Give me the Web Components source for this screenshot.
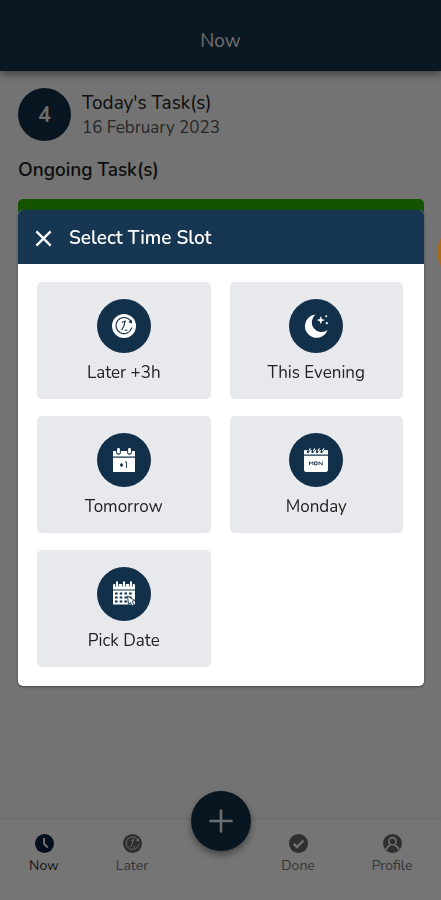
<!DOCTYPE html>
<html lang="en">
<head>
<meta charset="utf-8">
<meta name="viewport" content="width=device-width, initial-scale=1">
<title>Now</title>
<style>
  html, body { margin: 0; height: 100%; }
  body {
    --navy: #163550;
    --deep: #13304a;
    --page: #fafafa;
    font-family: Nunito, "Open Sans", "Noto Sans", sans-serif;
    background: var(--page);
    color: #222;
    overflow: hidden;
  }
</style>
</head>
<body>
<task-app></task-app>
<script>
const define = (name, html, setup) => {
  const template = document.createElement('template');
  template.innerHTML = html;
  customElements.define(name, class extends HTMLElement {
    constructor() {
      super();
      this.attachShadow({ mode: 'open' }).append(template.content.cloneNode(true));
    }
    connectedCallback() { if (setup) setup(this, this.shadowRoot); }
  });
};

const icons = {
  close: '<svg viewBox="0 0 24 24"><path d="M3 3L21 21M21 3L3 21" fill="none" stroke="currentColor" stroke-width="3"/></svg>',
  plus: '<svg viewBox="0 0 24 24"><path d="M12 1.500V22.500M1.500 12H22.500" fill="none" stroke="currentColor" stroke-width="2.600" stroke-linecap="round"/></svg>',
  later: `<svg viewBox="0 0 24 24"><circle cx="12" cy="12" r="12" fill="currentColor"/>
    <g fill="none" stroke="var(--cut)" stroke-linecap="round">
    <path d="M18.200 6.500A8 8 0 1 0 19.700 13.800" stroke-width="1.100"/>
    <path d="M10.200 8.200L13.200 7.200L11.800 12.200L9.800 15.800" stroke-width="1.100"/>
    <path d="M13 16.200H15" stroke-width="1"/></g>
    <path d="M19.600 5.200L20.200 9.400L16.400 8.200Z" fill="var(--cut)"/></svg>`,
  evening: `<svg viewBox="0 0 24 24"><path fill="currentColor" d="M11.500 .5A11.700 11.700 0 1 0 23.600 16A8.300 8.300 0 0 1 11.500 .5Z"/>
    <path fill="currentColor" d="M16.800 2L17.900 5L20.900 6.100L17.900 7.200L16.800 10.200L15.700 7.200L12.700 6.100L15.700 5Z"/>
    <circle cx="22.200" cy="2.200" r="1" fill="currentColor"/><circle cx="22.800" cy="9.200" r="1.100" fill="currentColor"/></svg>`,
  tomorrow: `<svg viewBox="0 0 24 24"><path fill="currentColor" d="M1 3H4.200V5.500Q6.500 8 8.800 5.500V3H15.200V5.500Q17.500 8 19.800 5.500V3H23V8.600H1ZM1 9.700H23V24H1Z"/>
    <rect x="5.100" y="0" width="2.800" height="5.500" rx="1.200" fill="currentColor"/><rect x="16.100" y="0" width="2.800" height="5.500" rx="1.200" fill="currentColor"/>
    <path d="M8 17H11M9.500 15.200V18.800" stroke="var(--cut)" stroke-width="1.500"/><path d="M13 14H14.500V20" fill="none" stroke="var(--cut)" stroke-width=".9"/></svg>`,
  monday: `<svg viewBox="0 0 24 24"><path fill="currentColor" d="M0 3Q0 2 1 2H23Q24 2 24 3V6.500H0ZM0 7.700H24V21.500Q24 24 21.500 24H2.500Q0 24 0 21.500Z"/>
    <g stroke-linecap="round"><path d="M4 3.800L6 1M8.500 3.800L10.500 1M13 3.800L15 1M17.500 3.800L19.500 1" stroke="var(--cut)" stroke-width="2.400"/>
    <path d="M5 2.800L6.200 .8M9.500 2.800L10.700 .8M14 2.800L15.200 .8M18.500 2.800L19.700 .8" stroke="currentColor" stroke-width="1.200"/></g>
    <path d="M5.500 17V13.700L7.200 15.500L8.900 13.700V17M10.600 13.900H13V16.800H10.600ZM14.900 17V13.800L18.200 17V13.600" fill="none" stroke="var(--cut)" stroke-width=".9"/></svg>`,
  pick: `<svg viewBox="0 0 24 24"><path fill="currentColor" d="M1 3Q1 2 2 2H22Q23 2 23 3V7.500H1ZM1 8.600H23V22.500H1Z"/>
    <path d="M5 0V4.500M12 0V4.500M19 0V4.500" stroke="var(--cut)" stroke-width="3.600"/>
    <path d="M5 .3V4.200M12 .3V4.200M19 .3V4.200" stroke="currentColor" stroke-width="2" stroke-linecap="round"/>
    <path d="M3 11.500H21M3 15.500H21M3 19.500H21" stroke="var(--cut)" stroke-width="2" stroke-dasharray="2.600 2.100"/>
    <path d="M15.500 14L23 18.500L20.200 19.200L22 23L20 24L18.300 20.500L16.500 22.400Z" fill="currentColor" stroke="var(--cut)" stroke-width=".9"/></svg>`,
  now: '<svg viewBox="0 0 24 24"><circle cx="12" cy="12" r="12" fill="currentColor"/><path d="M11.500 5V12.500L16 17" fill="none" stroke="var(--cut)" stroke-width="2.400"/></svg>',
  done: '<svg viewBox="0 0 24 24"><circle cx="12" cy="12" r="12" fill="currentColor"/><path d="M6 12.500L10 16.500L18.200 8.300" fill="none" stroke="var(--cut)" stroke-width="2.800"/></svg>',
  profile: `<svg viewBox="0 0 24 24"><circle cx="12" cy="12" r="12" fill="currentColor"/><circle cx="12" cy="9.200" r="4.600" fill="none" stroke="var(--cut)" stroke-width="2"/>
    <path d="M3.600 20.200Q5.600 15.400 9.200 14.200M20.400 20.200Q18.400 15.400 14.800 14.200" fill="none" stroke="var(--cut)" stroke-width="2"/></svg>`
};

define('ui-icon', `<style>
  :host { display: block; width: 24px; height: 24px; flex: none; }
  svg { display: block; width: 100%; height: 100%; overflow: visible; }
  div { width: 100%; height: 100%; }
</style><div></div>`, (host, root) => {
  root.querySelector('div').innerHTML = icons[host.getAttribute('name')] || '';
});

define('app-bar', `<style>
  :host { display: block; background: var(--navy); color: #eee; box-shadow: 0 3px 8px rgba(0,0,0,.45); }
  h1 { margin: 0; padding: 28px 16px 17px; font-size: 19px; line-height: 26px; font-weight: 400; text-align: center; }
</style><h1><slot></slot></h1>`);

define('task-summary', `<style>
  :host { display: flex; align-items: center; gap: 11px; }
  .count { width: 53px; height: 53px; border-radius: 50%; background: var(--deep); color: #eee;
    display: grid; place-items: center; font-size: 21px; font-weight: 700; }
  .title { font-size: 19px; line-height: 26px; color: #222; }
  .date { font-size: 17px; line-height: 24px; color: #555; }
</style>
<div class="count"><slot name="count"></slot></div>
<div><div class="title"><slot name="title"></slot></div><div class="date"><slot name="date"></slot></div></div>`);

define('task-card', `<style>
  :host { display: block; height: 320px; border-radius: 5px; background: #fff; border-top: 14px solid #2db700; }
</style>`);

define('nav-item', `<style>
  :host { display: block; }
  a { display: flex; flex-direction: column; align-items: center; color: inherit; text-decoration: none; font-size: 14px; line-height: 20px; gap: 3px; }
  ui-icon { width: 19px; height: 19px; --cut: #fafafa; color: #666; }
  :host([active]) { color: #333; }
  :host([active]) ui-icon { color: #0b1f45; }
</style><a href="#"><ui-icon></ui-icon><span><slot></slot></span></a>`, (host, root) => {
  const icon = document.createElement('ui-icon');
  icon.setAttribute('name', host.getAttribute('icon'));
  root.querySelector('ui-icon').replaceWith(icon);
});

define('bottom-nav', `<style>
  :host { display: block; color: #777; }
  nav { display: grid; grid-template-columns: 62fr 114fr 64fr 90fr 98fr; padding: 14px 0 24px 13px;
    background: #fefefe; box-shadow: 0 -1px 4px rgba(0,0,0,.08); }
  .add { position: relative; }
  button { position: absolute; left: 50%; bottom: 25px; transform: translateX(-50%); width: 60px; height: 60px;
    padding: 0; border: 0; border-radius: 50%; display: grid; place-items: center; background: var(--deep); color: #eee;
    box-shadow: 0 4px 7px rgba(0,0,0,.4); }
</style>
<nav>
  <nav-item icon="now" active>Now</nav-item>
  <nav-item icon="later">Later</nav-item>
  <div class="add"><button aria-label="Add task"><ui-icon name="plus"></ui-icon></button></div>
  <nav-item icon="done">Done</nav-item>
  <nav-item icon="profile">Profile</nav-item>
</nav>`);

define('slot-option', `<style>
  :host { display: block; }
  button { width: 100%; min-height: 117px; padding: 17px 4px 14px; border: 0; border-radius: 5px; background: #e7e9ec;
    display: flex; flex-direction: column; align-items: center; gap: 7px; font: inherit; font-size: 17px; line-height: 25px; color: #222; }
  .disc { width: 54px; height: 54px; border-radius: 50%; background: var(--deep); color: #fff; --cut: var(--deep);
    display: grid; place-items: center; }
</style><button><span class="disc"></span><span><slot></slot></span></button>`, (host, root) => {
  const icon = document.createElement('ui-icon');
  icon.setAttribute('name', host.getAttribute('icon'));
  root.querySelector('.disc').replaceChildren(icon);
});

define('slot-dialog', `<style>
  :host { display: block; border-radius: 5px; overflow: hidden; background: #fff; box-shadow: 0 1px 3px rgba(0,0,0,.4); }
  header { display: flex; align-items: center; gap: 16px; padding: 15px 16px 13px; background: #173652; color: #fff; }
  button { padding: 0; border: 0; background: none; color: inherit; }
  ui-icon { width: 19px; height: 19px; }
  h2 { margin: 0; font-size: 19px; line-height: 26px; font-weight: 600; }
  .options { display: grid; grid-template-columns: 1fr 1fr; gap: 17px 19px; padding: 18px 21px 19px 19px; }
</style>
<header><button aria-label="Close"><ui-icon name="close"></ui-icon></button><h2>Select Time Slot</h2></header>
<div class="options"><slot></slot></div>`);

define('task-app', `<style>
  :host { display: flex; flex-direction: column; min-height: 100vh; }
  main { flex: 1; padding: 17px 17px 0 18px; }
  task-summary { margin-bottom: 16px; }
  h2 { margin: 0 0 16px; font-size: 19px; line-height: 26px; font-weight: 600; color: #1c1c1c; }
  .scrim { position: fixed; inset: 0; display: flex; flex-direction: column; justify-content: center; padding: 0 17px 4px 18px;
    background: rgba(0,0,0,.54); }
  .clip { position: fixed; inset: 0; overflow: hidden; pointer-events: none; }
  .bubble { position: absolute; top: 225px; right: -50px; width: 54px; height: 54px; border-radius: 50%; background: #a56b1d; }
</style>
<app-bar>Now</app-bar>
<main>
  <task-summary><span slot="count">4</span><span slot="title">Today's Task(s)</span><span slot="date">16 February 2023</span></task-summary>
  <h2>Ongoing Task(s)</h2>
  <task-card></task-card>
</main>
<bottom-nav></bottom-nav>
<div class="scrim">
  <slot-dialog role="dialog" aria-label="Select Time Slot">
    <slot-option icon="later">Later +3h</slot-option>
    <slot-option icon="evening">This Evening</slot-option>
    <slot-option icon="tomorrow">Tomorrow</slot-option>
    <slot-option icon="monday">Monday</slot-option>
    <slot-option icon="pick">Pick Date</slot-option>
  </slot-dialog>
</div>
<div class="clip"><div class="bubble"></div></div>`);
</script>
</body>
</html>
